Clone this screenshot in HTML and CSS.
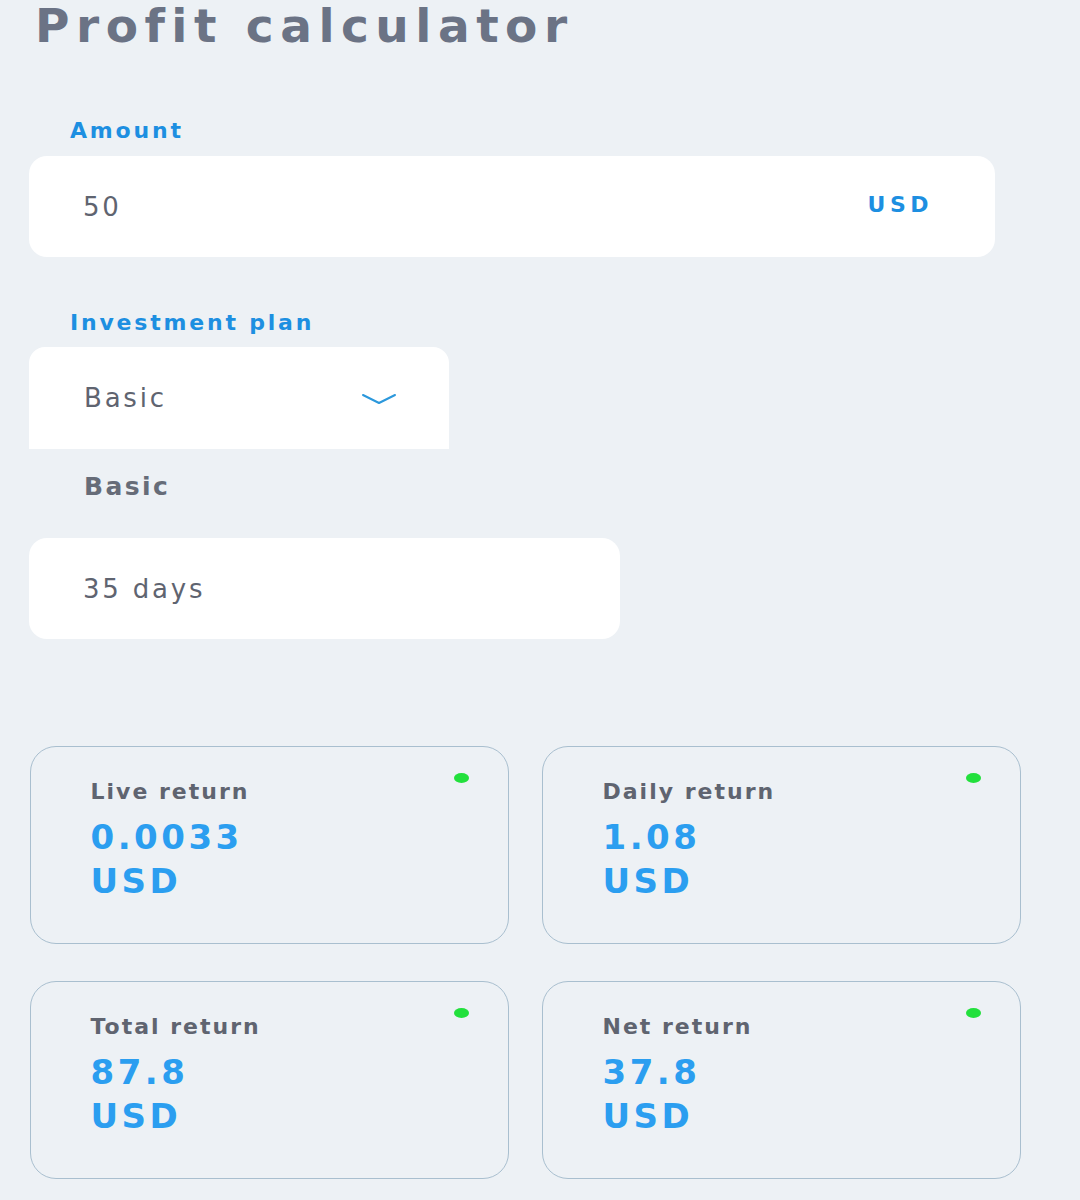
FILE: index.html
```html
<!DOCTYPE html>
<html lang="en">
<head>
<meta charset="utf-8">
<title>Profit calculator</title>
<link rel="stylesheet" href="styles.css">
</head>
<body>
<main class="page">
  <h1 class="title">Profit calculator</h1>

  <section class="field field-amount">
    <div class="field-label">Amount</div>
    <div class="input-box amount-box">
      <span class="input-value">50</span>
      <span class="currency">USD</span>
    </div>
  </section>

  <section class="field field-plan">
    <div class="field-label">Investment plan</div>
    <div class="select-box">
      <span class="input-value">Basic</span>
      <svg class="chevron" width="34" height="12" viewBox="0 0 34 12" aria-hidden="true">
        <path d="M1 2 L17 10 L33 2" fill="none" stroke="#2b98dc" stroke-width="2" stroke-linecap="round" stroke-linejoin="round"/>
      </svg>
    </div>
    <div class="plan-name">Basic</div>
    <div class="input-box duration-box">
      <span class="input-value">35 days</span>
    </div>
  </section>

  <section class="cards">
    <div class="card">
      <span class="dot"></span>
      <div class="card-label">Live return</div>
      <div class="card-value">0.0033<br>USD</div>
    </div>
    <div class="card">
      <span class="dot"></span>
      <div class="card-label">Daily return</div>
      <div class="card-value">1.08<br>USD</div>
    </div>
    <div class="card">
      <span class="dot"></span>
      <div class="card-label">Total return</div>
      <div class="card-value">87.8<br>USD</div>
    </div>
    <div class="card">
      <span class="dot"></span>
      <div class="card-label">Net return</div>
      <div class="card-value">37.8<br>USD</div>
    </div>
  </section>
</main>
</body>
</html>
```

FILE: styles.css
```css
html, body {
  margin: 0;
  padding: 0;
  background: #edf1f5;
}

body {
  font-family: "DejaVu Sans", "Verdana", sans-serif;
  color: #5f6470;
}

.page {
  padding: 0 0 0 29px;
  width: 1051px;
  box-sizing: border-box;
}

.title {
  margin: 3px 0 0 6px;
  font-size: 47px;
  line-height: 46px;
  font-weight: 700;
  letter-spacing: 6.5px;
  color: #6b7385;
}

.field-label {
  font-size: 22px;
  line-height: 24px;
  font-weight: 700;
  letter-spacing: 2.8px;
  color: #1d8fe1;
  padding-left: 41px;
}

.field-amount {
  margin-top: 70px;
}

.field-amount .input-box {
  margin-top: 13px;
}

.input-box {
  background: #ffffff;
  border-radius: 18px;
  display: flex;
  align-items: center;
  box-sizing: border-box;
  padding-left: 54px;
}

.amount-box {
  width: 966px;
  height: 101px;
  justify-content: space-between;
  padding-right: 62px;
}

.input-value {
  font-size: 26px;
  letter-spacing: 2.8px;
  color: #5f6470;
}

.currency {
  font-size: 22px;
  font-weight: 700;
  letter-spacing: 4.5px;
  color: #1d8fe1;
  margin-top: -5px;
}

.field-plan {
  margin-top: 54px;
}

.select-box {
  margin-top: 12px;
  width: 420px;
  height: 102px;
  background: #ffffff;
  border-radius: 16px 16px 0 0;
  display: flex;
  align-items: center;
  justify-content: space-between;
  box-sizing: border-box;
  padding: 0 53px 0 55px;
}

.chevron {
  display: block;
  margin-top: 2px;
}

.plan-name {
  margin-top: 23px;
  padding-left: 55px;
  font-size: 25px;
  line-height: 30px;
  font-weight: 700;
  letter-spacing: 2.4px;
  color: #666c78;
}

.duration-box {
  margin-top: 36px;
  width: 591px;
  height: 101px;
}

.cards {
  margin-top: 107px;
  margin-left: 1px;
  display: grid;
  grid-template-columns: 479px 479px;
  column-gap: 33px;
  row-gap: 37px;
}

.card {
  position: relative;
  height: 198px;
  box-sizing: border-box;
  border: 1.5px solid #a9bfcf;
  border-radius: 26px;
  padding: 32px 0 0 59.5px;
}

.dot {
  position: absolute;
  top: 25.5px;
  right: 39.5px;
  width: 15px;
  height: 10px;
  border-radius: 50%;
  background: #22e03c;
}

.card-label {
  font-size: 22px;
  line-height: 26px;
  font-weight: 700;
  letter-spacing: 2px;
  color: #5f6470;
}

.card-value {
  margin-top: 10px;
  font-size: 34px;
  line-height: 44px;
  font-weight: 700;
  letter-spacing: 3.5px;
  color: #2b9ef0;
}
```
